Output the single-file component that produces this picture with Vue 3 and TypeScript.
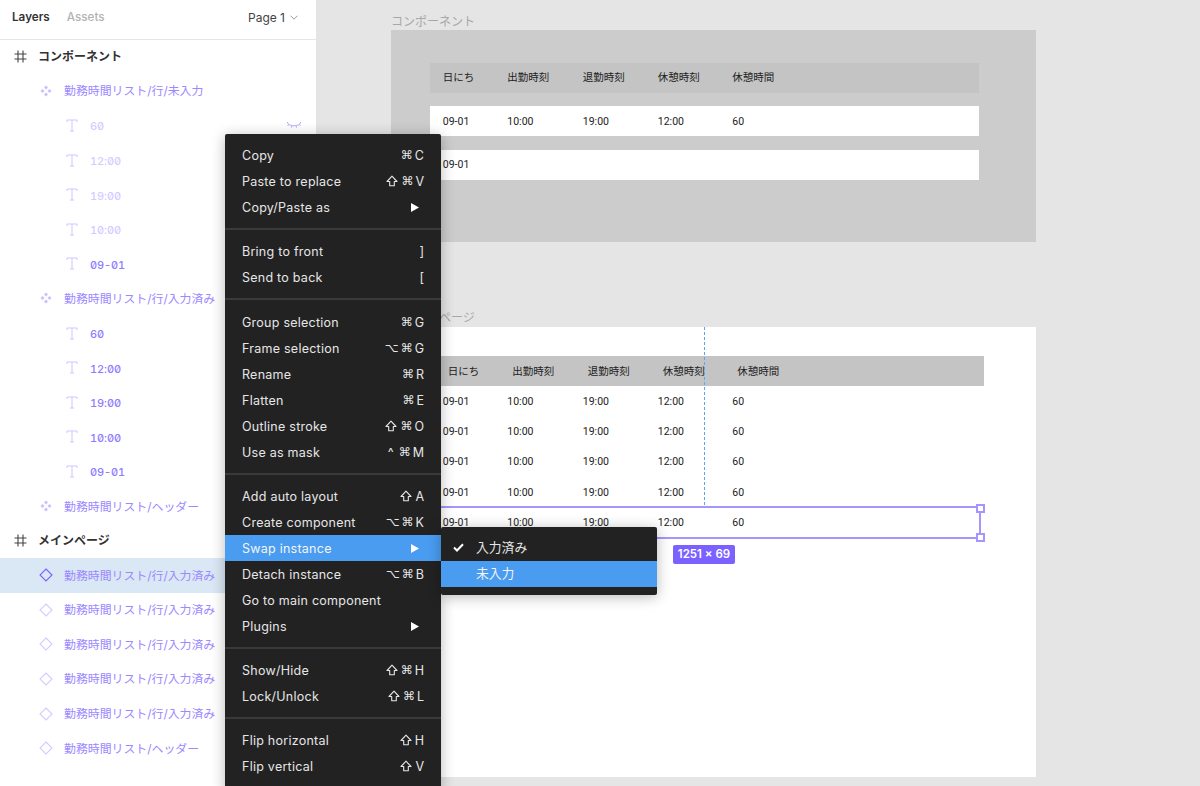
<script setup lang="ts">
type Layer = { kind: 'group' | 'comp' | 'text' | 'inst'; label: string; dim?: boolean; eye?: boolean; sel?: boolean; active?: boolean }
const layers: Layer[] = [
  { kind: 'group', label: 'コンポーネント' },
  { kind: 'comp', label: '勤務時間リスト/行/未入力' },
  { kind: 'text', label: '60', dim: true, eye: true },
  { kind: 'text', label: '12:00', dim: true },
  { kind: 'text', label: '19:00', dim: true },
  { kind: 'text', label: '10:00', dim: true },
  { kind: 'text', label: '09-01' },
  { kind: 'comp', label: '勤務時間リスト/行/入力済み' },
  { kind: 'text', label: '60' },
  { kind: 'text', label: '12:00' },
  { kind: 'text', label: '19:00' },
  { kind: 'text', label: '10:00' },
  { kind: 'text', label: '09-01' },
  { kind: 'comp', label: '勤務時間リスト/ヘッダー' },
  { kind: 'group', label: 'メインページ' },
  { kind: 'inst', label: '勤務時間リスト/行/入力済み', sel: true, active: true },
  { kind: 'inst', label: '勤務時間リスト/行/入力済み' },
  { kind: 'inst', label: '勤務時間リスト/行/入力済み' },
  { kind: 'inst', label: '勤務時間リスト/行/入力済み' },
  { kind: 'inst', label: '勤務時間リスト/行/入力済み' },
  { kind: 'inst', label: '勤務時間リスト/ヘッダー' },
]
type Item = { label: string; keys?: string[]; arrow?: boolean; hi?: boolean }
const groups: Item[][] = [
  [
    { label: 'Copy', keys: ['⌘', 'C'] },
    { label: 'Paste to replace', keys: ['⇧', '⌘', 'V'] },
    { label: 'Copy/Paste as', arrow: true },
  ],
  [
    { label: 'Bring to front', keys: [']'] },
    { label: 'Send to back', keys: ['['] },
  ],
  [
    { label: 'Group selection', keys: ['⌘', 'G'] },
    { label: 'Frame selection', keys: ['⌥', '⌘', 'G'] },
    { label: 'Rename', keys: ['⌘', 'R'] },
    { label: 'Flatten', keys: ['⌘', 'E'] },
    { label: 'Outline stroke', keys: ['⇧', '⌘', 'O'] },
    { label: 'Use as mask', keys: ['^', '⌘', 'M'] },
  ],
  [
    { label: 'Add auto layout', keys: ['⇧', 'A'] },
    { label: 'Create component', keys: ['⌥', '⌘', 'K'] },
    { label: 'Swap instance', arrow: true, hi: true },
    { label: 'Detach instance', keys: ['⌥', '⌘', 'B'] },
    { label: 'Go to main component' },
    { label: 'Plugins', arrow: true },
  ],
  [
    { label: 'Show/Hide', keys: ['⇧', '⌘', 'H'] },
    { label: 'Lock/Unlock', keys: ['⇧', '⌘', 'L'] },
  ],
  [
    { label: 'Flip horizontal', keys: ['⇧', 'H'] },
    { label: 'Flip vertical', keys: ['⇧', 'V'] },
  ],
]
const head = ['日にち', '出勤時刻', '退勤時刻', '休憩時刻', '休憩時間']
const full = ['09-01', '10:00', '19:00', '12:00', '60']
</script>

<template>
  <div class="app">
    <aside class="side">
      <header class="tabs">
        <span class="tab on">Layers</span>
        <span class="tab">Assets</span>
        <span class="page">Page 1
          <svg width="8" height="5" viewBox="0 0 8 5"><path d="M.5.7 4 4.200 7.500.7" fill="none" stroke="#999" /></svg>
        </span>
      </header>
      <ul class="list">
        <li v-for="(l, i) in layers" :key="i" class="row" :class="[l.kind, { sel: l.sel }]">
          <svg v-if="l.kind === 'group'" class="ic" width="13" height="13" viewBox="0 0 13 13">
            <path d="M4 .5v12M9 .5v12M.5 4h12M.5 9h12" fill="none" stroke="#444" stroke-width="1.100" />
          </svg>
          <svg v-else-if="l.kind === 'comp'" class="ic" width="12" height="12" viewBox="0 0 12 12">
            <path d="M6 .5 8 2.500 6 4.500 4 2.500ZM2.500 4 4.500 6 2.500 8 .5 6ZM9.500 4 11.500 6 9.500 8 7.500 6ZM6 7.500 8 9.500 6 11.500 4 9.500Z" fill="#c9c0ff" />
          </svg>
          <svg v-else-if="l.kind === 'inst'" class="ic" width="14" height="14" viewBox="0 0 14 14">
            <path d="M7 1 13 7 7 13 1 7Z" fill="none" :stroke="l.active ? '#7b61ff' : '#d3cbff'" stroke-width="1.100" />
          </svg>
          <svg v-else class="ic" width="12" height="13" viewBox="0 0 12 13">
            <path d="M1 3V1h10v2M6 1v11M4 12h4" fill="none" stroke="#cfc6ff" stroke-width="1" />
          </svg>
          <span class="name" :class="{ dim: l.dim }">{{ l.label }}</span>
          <svg v-if="l.eye" class="eye" width="16" height="8" viewBox="0 0 16 8">
            <path d="M1.500 2.500C4.500 5.500 11.500 5.500 14.500 2.500M3 3.500 1.500 5M6 5 5.300 6.800M10 5 10.700 6.800M13 3.500 14.500 5M1 1l1.500 1.500M15 1l-1.500 1.500" fill="none" stroke="#b9adff" stroke-width="1" />
          </svg>
        </li>
      </ul>
    </aside>

    <main class="canvas">
      <span class="frame-label f1">コンポーネント</span>
      <section class="frame one">
        <div class="trow thead"><span v-for="h in head" :key="h">{{ h }}</span></div>
        <div class="trow tbody"><span v-for="c in full" :key="c">{{ c }}</span></div>
        <div class="trow tbody"><span>09-01</span></div>
      </section>

      <span class="frame-label f2">メインページ</span>
      <section class="frame two">
        <div class="trow thead"><span v-for="h in head" :key="h">{{ h }}</span></div>
        <div v-for="n in 5" :key="n" class="trow plain"><span v-for="c in full" :key="c">{{ c }}</span></div>
      </section>

      <div class="guide"></div>
      <div class="selection">
        <i class="handle tr"></i>
        <i class="handle br"></i>
      </div>
      <span class="size">1251 × 69</span>
    </main>

    <nav class="menu">
      <template v-for="(g, gi) in groups" :key="gi">
        <hr v-if="gi" class="sep" :class="{ wide: gi === 2 }" />
        <div v-for="it in g" :key="it.label" class="item" :class="{ hi: it.hi }">
          <span>{{ it.label }}</span>
          <span v-if="it.keys" class="keys">
            <template v-for="k in it.keys" :key="k">
              <svg v-if="k === '⇧'" class="shift" width="12" height="12" viewBox="0 0 12 12"><path d="M6 1.200 11 6.500H8.300V10.700H3.700V6.500H1Z" fill="none" stroke="#e6e6e6" stroke-width="1.100" stroke-linejoin="round" /></svg>
              <b v-else :class="{ sym: k === '⌘' || k === '⌥', ctrl: k === '^' }">{{ k }}</b>
            </template>
          </span>
          <svg v-if="it.arrow" class="arrow" width="8" height="9" viewBox="0 0 8 9"><path d="M0 0 8 4.500 0 9Z" fill="#fff" /></svg>
        </div>
      </template>
    </nav>

    <nav class="submenu">
      <div class="sub">
        <svg class="check" width="11" height="9" viewBox="0 0 11 9"><path d="M1 4.500 4 7.500 10 1.200" fill="none" stroke="#fff" stroke-width="2" /></svg>
        <span>入力済み</span>
      </div>
      <div class="sub hi"><span>未入力</span></div>
    </nav>
  </div>
</template>

<style>
html, body { margin: 0; height: 100%; overflow: hidden; background: #e5e5e5; }
</style>

<style scoped>
.app {
  position: relative;
  display: flex;
  width: 1200px;
  height: 786px;
  overflow: hidden;
  font-family: Inter, "Noto Sans CJK JP", sans-serif;
  background: #e5e5e5;
}
.side {
  width: 316px;
  height: 786px;
  flex: none;
  background: #fff;
}
.tabs {
  display: flex;
  align-items: center;
  height: 40px;
  box-sizing: border-box;
  padding: 0 17px 5px 12px;
  border-bottom: 1px solid #e5e5e5;
  font-size: 11.700px;
}
.tab { font-weight: 500; color: #b3b3b3; margin-right: 17px; }
.tab.on { font-weight: 600; color: #333; }
.page { margin-left: auto; color: #444; font-size: 12px; display: flex; align-items: center; gap: 5px; position: relative; left: -1px; }
.list { list-style: none; margin: 0; padding: 0; }
.row {
  display: flex;
  align-items: center;
  height: 34.600px;
  position: relative;
  font-size: 11.900px;
  color: #9a89ff;
  white-space: nowrap;
}
.list .row:first-child { margin-top: -1px; }
.row:not(.text) .name { position: relative; top: -1px; }
.row.group { padding-left: 14px; color: #333; font-weight: 600; font-size: 12px; }
.row.group .ic { margin-right: 11px; }
.row.comp { padding-left: 40px; }
.row.comp .ic { margin-right: 12px; }
.row.inst { padding-left: 39px; }
.row.inst .ic { margin-right: 11px; }
.row.text {
  padding-left: 66px;
  font-family: Inter, monospace;
  font-size: 11px;
  font-weight: 500;
  letter-spacing: -.100px;
  font-feature-settings: "tnum", "zero";
  color: #8f7cff;
}
.row.text .name { position: relative; top: 1px; }
.row.text .ic { margin-right: 12px; }
.row.sel { background: #dae7f5; }
.name.dim { color: #d5ccff; }
.eye { position: absolute; left: 286px; top: 13px; }
.canvas { flex: 1; position: relative; }
.frame-label {
  position: absolute;
  font-size: 12px;
  color: #a8a8a8;
}
.f1 { left: 75px; top: 12px; }
.f2 { left: 87px; top: 308px; }
.frame { position: absolute; left: 75px; width: 645px; box-sizing: border-box; }
.one {
  top: 30px;
  height: 212px;
  background: #ccc;
  padding: 33px 57px 0 39px;
}
.two {
  top: 327px;
  height: 450px;
  background: #fff;
  padding: 29px 52px 0 44px;
}
.trow {
  display: grid;
  grid-template-columns: 64.500px 75.500px 75px 74.500px 1fr;
  align-items: center;
  height: 30px;
  padding-left: 12.800px;
  font-size: 10.500px;
  font-family: Roboto, "Noto Sans CJK JP", sans-serif;
  color: #222;
}
.thead { background: #c4c4c4; padding-bottom: 3px; box-sizing: border-box; }
.two .thead { padding-bottom: 2px; }
.tbody { background: #fff; margin-top: 13.500px; }
.thead + .tbody { margin-top: 13px; }
.plain { margin: .300px 0 0 -5px; width: 100%; }
.guide {
  position: absolute;
  left: 388px;
  top: 327px;
  height: 178px;
  border-left: 1px dashed #5aa8f5;
}
.selection {
  position: absolute;
  left: 120px;
  top: 505.500px;
  width: 543px;
  height: 29px;
  border: 2px solid #a595ff;
  border-left: none;
}
.handle {
  position: absolute;
  width: 9px;
  height: 9px;
  background: #fff;
  border: 2px solid #a595ff;
  box-sizing: border-box;
}
.handle.tr { right: -5.500px; top: -4px; }
.handle.br { right: -5.500px; bottom: -5.500px; }
.size {
  position: absolute;
  left: 357px;
  top: 545px;
  height: 19px;
  width: 62px;
  border-radius: 2px;
  background: #7b61ff;
  color: #fff;
  font-size: 11.500px;
  font-weight: 600;
  line-height: 19px;
  text-align: center;
}
.menu, .submenu {
  position: absolute;
  background: #222;
  color: #e6e6e6;
  border-radius: 2px;
  box-shadow: 0 2px 14px rgba(0, 0, 0, .28);
}
.menu {
  left: 225px;
  top: 134px;
  width: 216px;
  height: 660px;
  padding-top: 8px;
  box-sizing: border-box;
  font-size: 12.500px;
  letter-spacing: .25px;
}
.item {
  display: flex;
  align-items: center;
  justify-content: space-between;
  height: 26px;
  padding: 0 17px;
}
.item.hi { background: #4a9cf1; color: #f4f4f4; }
.keys { display: flex; align-items: center; gap: 2px; font-family: Inter, sans-serif; font-size: 12.500px; letter-spacing: 0; }
.keys b { font-weight: 400; }
.keys b.sym { font-family: "DejaVu Sans", sans-serif; font-size: 12px; }
.keys b.ctrl { margin-right: 3px; }
.shift { margin-right: 1px; }
.arrow { margin-left: auto; position: relative; right: 5px; }
.sep {
  height: 2px;
  border: 0;
  margin: 8px 0;
  background: #3a3a3a;
}
.sep.wide { margin-bottom: 9px; }
.submenu {
  left: 441px;
  top: 527px;
  width: 216px;
  height: 68px;
  padding-top: 8px;
  box-sizing: border-box;
  font-size: 12.800px;
}
.sub {
  display: flex;
  align-items: center;
  height: 26px;
  box-sizing: border-box;
  padding: 0 0 3px 35px;
  position: relative;
}
.sub.hi { background: #4a9cf1; color: #f4f4f4; }
.check { position: absolute; left: 12px; top: 8px; }
</style>
